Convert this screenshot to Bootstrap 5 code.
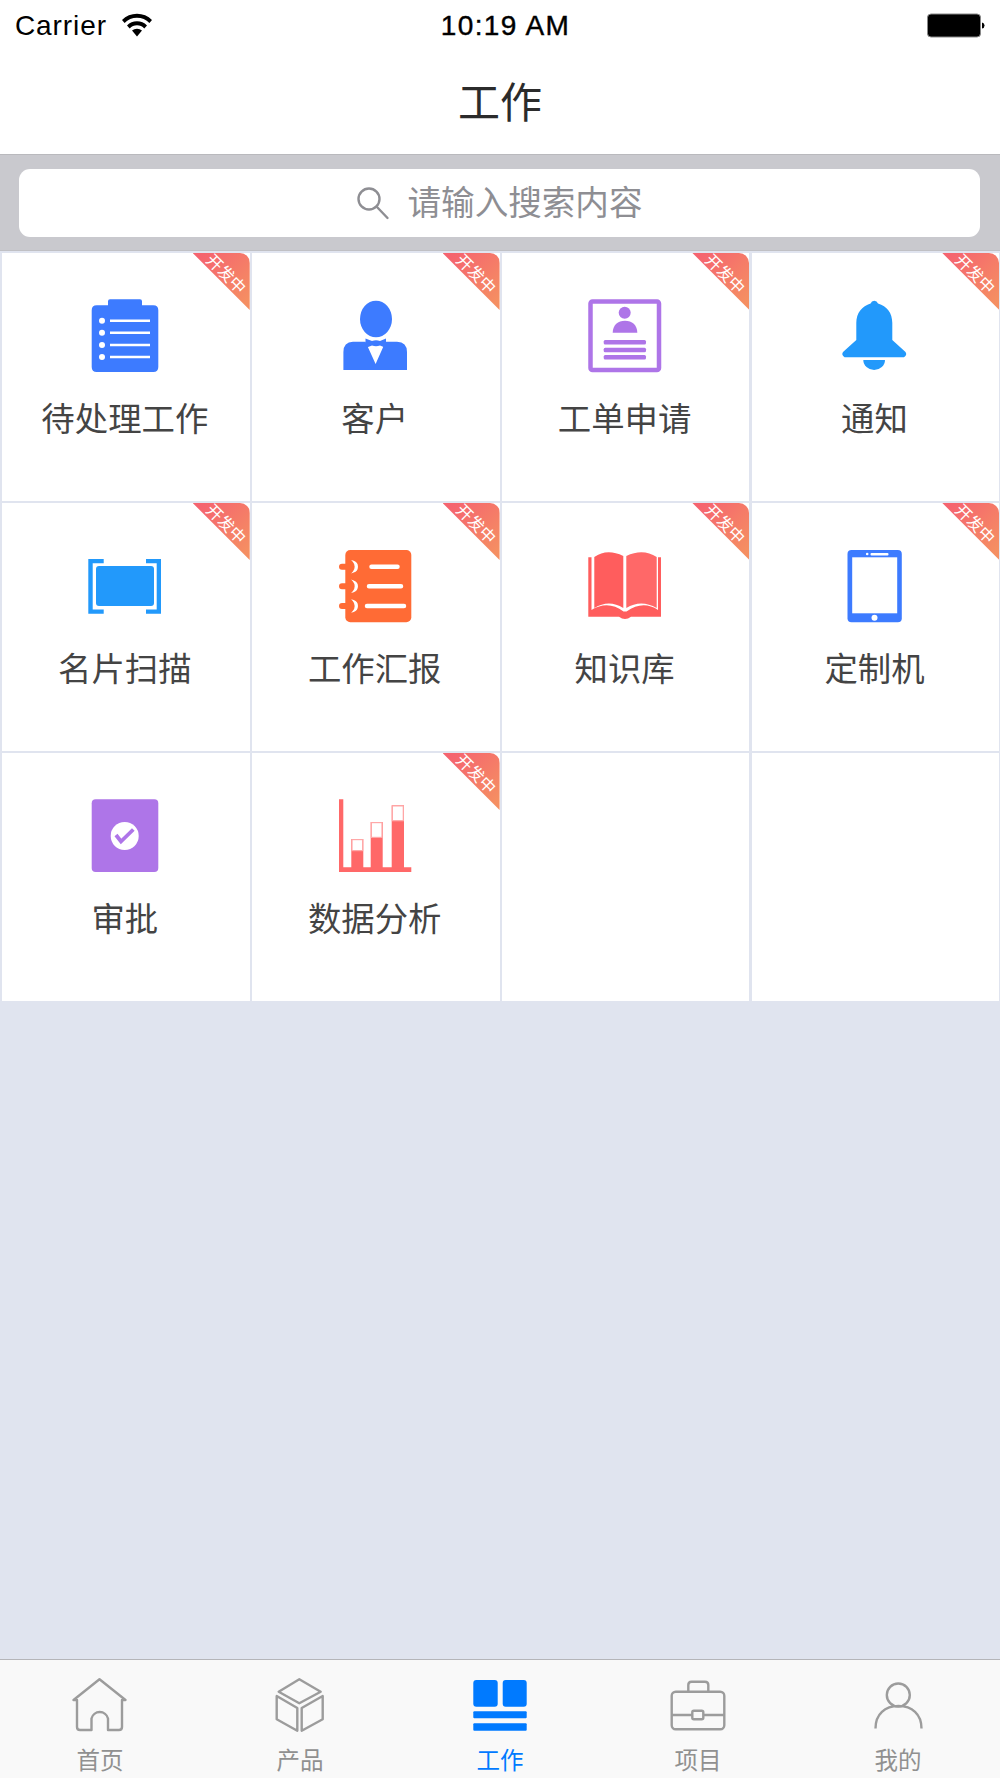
<!DOCTYPE html>
<html lang="zh-CN">
<head>
  <meta charset="UTF-8" />
  <meta name="viewport" content="width=device-width, initial-scale=1" />
  <title>工作</title>

  <!-- Bootstrap CSS -->
  <link href="https://cdn.jsdelivr.net/npm/bootstrap@5.3.3/dist/css/bootstrap.min.css" rel="stylesheet" />

  <style>
    body {
      background-color: #e0e4ef;
      font-family: "Noto Sans CJK SC", "Liberation Sans", sans-serif;
      overflow: hidden;
    }
    .status-bar {
      height: 53px;
      padding: 0 15px 2px;
      font-family: "Liberation Sans", sans-serif;
      font-size: 28px;
      letter-spacing: 0.9px;
      color: #000;
    }
    .status-wifi {
      margin: 0 0 2px 14px;
    }
    .status-time {
      left: 11px;
      right: 0;
      top: 5px;
      letter-spacing: 1.4px;
      -webkit-text-stroke: 0.4px #000;
    }
    .title-bar {
      height: 102px;
      font-size: 42px;
      line-height: 1;
      color: #2b2b2b;
      padding-bottom: 8px;
      border-bottom: 1px solid #b9b9bd;
    }
    .search-bar {
      height: 96px;
      background: #c9c9ce;
      padding: 14px 20px 13px 19px;
      border-bottom: 1px solid #c0c0c4;
    }
    .search-field {
      height: 68px;
      border-radius: 11px;
      color: #8e8e93;
      font-size: 33.6px;
      gap: 17px;
    }
    .search-text {
      padding-bottom: 4px;
    }
    .work-grid {
      display: grid;
      grid-template-columns: repeat(4, 247.7px);
      grid-auto-rows: 247.8px;
      gap: 2.2px;
      padding: 2px 0 0 2px;
    }
    .work-cell {
      position: relative;
      background: #fff;
      padding-top: 45px;
      text-align: center;
      color: #444;
      font-size: 33.4px;
      line-height: 1;
    }
    .work-cell svg {
      display: block;
      width: 74px;
      height: 75px;
      margin: 0 auto 27px;
      overflow: visible;
    }
    .work-label {
      display: block;
      margin-left: -2px;
    }
    .dev-ribbon {
      position: absolute;
      top: 0;
      right: 0;
      width: 57px;
      height: 57px;
      border-top-right-radius: 10px;
      background: linear-gradient(135deg, #f5646f 10%, #f58f62 90%);
      clip-path: polygon(0 0, 100% 0, 100% 100%);
    }
    .dev-ribbon span {
      position: absolute;
      top: 11px;
      left: 6px;
      width: 56px;
      color: #fff;
      font-size: 16px;
      line-height: 18px;
      text-align: center;
      transform: rotate(45deg);
    }
    .tab-bar {
      display: grid;
      grid-template-columns: 200px 200px 200px 196px 204px;
      height: 119px;
      background: #f9f9f9;
      border-top: 1px solid #b5b5b9;
      margin-top: auto;
    }
    .tab-item {
      padding-top: 16px;
      text-align: center;
      color: #909090;
      font-size: 23.5px;
      line-height: 1;
    }
    .tab-item svg {
      display: block;
      width: 60px;
      height: 56px;
      margin: 0 auto 16px;
      fill: none;
      stroke: #9c9c9c;
      stroke-width: 2.4;
      stroke-linejoin: round;
    }
    .tab-item.on {
      color: #007aff;
    }
    .tab-item.on svg {
      stroke: none;
      fill: #007aff;
    }
  </style>
</head>
<body>

<div class="d-flex flex-column vh-100">

  <!-- Status bar -->
  <div class="status-bar bg-white d-flex align-items-center position-relative">
    <span>Carrier</span>
    <svg class="status-wifi" width="32" height="24" viewBox="0 0 32 24">
      <path d="M1 7A21 21 0 0 1 31 7L28.400 10A17.200 17.200 0 0 0 3.600 10Z" fill="#000"/>
      <path d="M6 12.500A14 14 0 0 1 26 12.500L23.300 15.400A10 10 0 0 0 8.700 15.400Z" fill="#000"/>
      <path d="M11 17.600A7.400 7.400 0 0 1 21 17.600L16 23.600Z" fill="#000"/>
    </svg>
    <span class="status-time position-absolute text-center">10:19 AM</span>
    <div class="ms-auto d-flex align-items-center">
      <svg width="58" height="26" viewBox="0 0 58 26">
        <rect x="0.500" y="1" width="53" height="23" rx="3.500" fill="#000" stroke="#888" stroke-width="1"/>
        <path d="M55 9.500Q57.500 10 57.500 12.500T55 15.500Z" fill="#000"/>
      </svg>
    </div>
  </div>

  <!-- Title -->
  <div class="title-bar bg-white d-flex align-items-center justify-content-center">工作</div>

  <!-- Search -->
  <div class="search-bar">
    <div class="search-field bg-white d-flex align-items-center justify-content-center">
      <svg width="34" height="34" viewBox="0 0 34 34" fill="none" stroke="#8e8e93" stroke-width="2.400">
        <circle cx="13" cy="13" r="10.500"/>
        <path d="M20.500 20.500L31.500 32" stroke-linecap="round"/>
      </svg>
      <span class="search-text">请输入搜索内容</span>
    </div>
  </div>

  <!-- Work grid -->
  <div class="work-grid">
    <div class="work-cell">
      <svg viewBox="0 0 74 75">
        <path d="M19 7.300V3.300Q19 1.300 21 1.300H51Q53 1.300 53 3.300V7.300H64.300Q69.300 7.300 69.300 12.300V69Q69.300 74 64.300 74H7.700Q2.700 74 2.700 69V12.300Q2.700 7.300 7.700 7.300Z" fill="#3d7bff"/>
        <g fill="#fff"><circle cx="13" cy="22.700" r="3"/><circle cx="13" cy="34.700" r="3"/><circle cx="13" cy="47" r="3"/><circle cx="13" cy="59" r="3"/></g>
        <path d="M21 22.700H61M21 34.700H61M21 47H61M21 59H61" stroke="#fff" stroke-width="2.600"/>
      </svg>
      <span class="work-label">待处理工作</span>
      <div class="dev-ribbon"><span>开发中</span></div>
    </div>
    <div class="work-cell">
      <svg viewBox="0 0 74 75">
        <g fill="#3d7bff">
          <ellipse cx="37" cy="21" rx="16" ry="18.300"/>
          <path d="M4.400 72V54Q4.400 44 14 43.700H26.500L36.600 66L46.500 43.700H58Q68 44 68 54V72Z"/>
          <path d="M26.500 40.500L33 43Q37 41.500 41 43L47 40.500V50L41 47.500Q37 49 33 47.500L26.500 50Z"/>
        </g>
      </svg>
      <span class="work-label">客户</span>
      <div class="dev-ribbon"><span>开发中</span></div>
    </div>
    <div class="work-cell">
      <svg viewBox="0 0 74 75">
        <rect x="1.500" y="3.500" width="68.500" height="68.500" rx="2" fill="none" stroke="#ae75e8" stroke-width="4.500"/>
        <g fill="#ae75e8">
          <circle cx="35.700" cy="14.700" r="6"/>
          <path d="M23.700 34.700C23.700 27 29 22.700 36 22.700S48.300 27 48.300 34.700Z"/>
          <rect x="14.700" y="42" width="42.300" height="4.500" rx="1.500"/>
          <rect x="14.700" y="49.700" width="42.300" height="4.500" rx="1.500"/>
          <rect x="14.700" y="57" width="42.300" height="4.500" rx="1.500"/>
        </g>
      </svg>
      <span class="work-label">工单申请</span>
      <div class="dev-ribbon"><span>开发中</span></div>
    </div>
    <div class="work-cell">
      <svg viewBox="0 0 74 75">
        <g fill="#2299fb">
          <path d="M36.300 2.700Q39 3 40 5.500C49 8 54.300 15 54.300 25V42L67.500 54Q69.500 57 66 59.300H6.600Q3 57 5 54L18.300 42V25C18.300 15 24 8 32.600 5.500Q33.500 3 36.300 2.700Z"/>
          <path d="M25.300 62H47A10.850 10 0 0 1 25.300 62Z"/>
        </g>
      </svg>
      <span class="work-label">通知</span>
      <div class="dev-ribbon"><span>开发中</span></div>
    </div>

    <div class="work-cell">
      <svg viewBox="0 0 74 75">
        <g fill="#2299fb">
          <path d="M14.700 11H-0.700V65.700H14.700V61.500H3.700V15.200H14.700Z"/>
          <path d="M57 11H72V65.700H57V61.500H67.700V15.200H57Z"/>
          <rect x="7" y="18" width="58" height="40" rx="3"/>
        </g>
      </svg>
      <span class="work-label">名片扫描</span>
      <div class="dev-ribbon"><span>开发中</span></div>
    </div>
    <div class="work-cell">
      <svg viewBox="0 0 74 75">
        <rect x="6.300" y="2" width="66" height="72.300" rx="5" fill="#ff6b35"/>
        <path d="M3 18.700H14M3 38.300H14M3 58H14" stroke="#ff6b35" stroke-width="6" stroke-linecap="round"/>
        <path d="M14.500 13.500A5.500 5.500 0 0 1 14.500 23.900A8 8 0 0 0 14.500 13.500ZM14.500 33.100A5.500 5.500 0 0 1 14.500 43.500A8 8 0 0 0 14.500 33.100ZM14.500 52.800A5.500 5.500 0 0 1 14.500 63.200A8 8 0 0 0 14.500 52.800Z" fill="#fff" stroke="#fff" stroke-width="1.500"/>
        <path d="M32.500 18.700H58.500M30 38.300H62M28 58H65" stroke="#fff" stroke-width="4.500" stroke-linecap="round"/>
      </svg>
      <span class="work-label">工作汇报</span>
      <div class="dev-ribbon"><span>开发中</span></div>
    </div>
    <div class="work-cell">
      <svg viewBox="0 0 74 75">
        <path d="M5.300 9Q18 0 34.300 8V60Q20 51 5.300 60Z" fill="#ff5d5d"/>
        <path d="M37.300 8Q54 0 67.700 9V60Q52 51 37.300 60Z" fill="#ff6868"/>
        <path d="M-0.700 9.300H2.500V62Q19 52 34.500 63.500H37.500Q54 52 69 62V9.300H72V68.700H42Q36 73.500 30 68.700H-0.700Z" fill="#ff5d5d"/>
      </svg>
      <span class="work-label">知识库</span>
      <div class="dev-ribbon"><span>开发中</span></div>
    </div>
    <div class="work-cell">
      <svg viewBox="0 0 74 75">
        <rect x="9.500" y="2" width="54.300" height="72.300" rx="4" fill="#3d7bff"/>
        <rect x="14.200" y="9.300" width="45" height="56" fill="#fff"/>
        <circle cx="36.500" cy="69.700" r="3" fill="#fff"/>
        <circle cx="29.200" cy="6" r="1.300" fill="#fff"/>
        <rect x="32.500" y="5" width="18" height="2.400" rx="1" fill="#fff"/>
      </svg>
      <span class="work-label">定制机</span>
      <div class="dev-ribbon"><span>开发中</span></div>
    </div>

    <div class="work-cell">
      <svg viewBox="0 0 74 75">
        <rect x="2.700" y="1.300" width="66.600" height="72.700" rx="4" fill="#ae75e8"/>
        <circle cx="35.700" cy="38" r="14" fill="#fff"/>
        <path d="M27 37L32 43.500L44.300 31.500" fill="none" stroke="#ae75e8" stroke-width="3.800"/>
      </svg>
      <span class="work-label">审批</span>
    </div>
    <div class="work-cell">
      <svg viewBox="0 0 74 75">
        <g fill="#ff6868">
          <path d="M0 1.300H4.300V69.300H72.300V74H0Z"/>
          <rect x="12.300" y="41" width="12" height="30"/>
          <rect x="31.700" y="24" width="12" height="47"/>
          <rect x="52.700" y="7.300" width="12.300" height="63"/>
        </g>
        <g fill="#fff" stroke="#ffa8a8" stroke-width="1.200">
          <rect x="13" y="41.600" width="10.600" height="11"/>
          <rect x="32.400" y="24.600" width="10.600" height="14.800"/>
          <rect x="53.400" y="7.900" width="10.900" height="14.800"/>
        </g>
      </svg>
      <span class="work-label">数据分析</span>
      <div class="dev-ribbon"><span>开发中</span></div>
    </div>
    <div class="work-cell"></div>
    <div class="work-cell"></div>
  </div>

  <!-- Tab bar -->
  <div class="tab-bar">
    <div class="tab-item">
      <svg viewBox="0 0 60 56"><path d="M3.500 24L29.500 3.200L55.500 24H52V51Q52 54 49 54H38V42.500A8.500 8.500 0 0 0 21.500 42.500V54H10Q7 54 7 51V24Z"/></svg>
      首页
    </div>
    <div class="tab-item">
      <svg viewBox="0 0 60 56">
        <path d="M29.300 3.300L50.700 15.700L29.300 27.300L8.700 15.700Z"/>
        <path d="M6.700 20V43.300L27.300 54.700V32Z"/>
        <path d="M52.700 20V43.300L31.700 54.700V32Z"/>
      </svg>
      产品
    </div>
    <div class="tab-item on">
      <svg viewBox="0 0 60 56">
        <rect x="3.300" y="4" width="24.400" height="26.700" rx="3"/>
        <rect x="32.700" y="4" width="24" height="26.700" rx="3"/>
        <rect x="3.300" y="35.300" width="53.400" height="7" rx="1"/>
        <rect x="3.300" y="47.300" width="53.400" height="7.400" rx="1"/>
      </svg>
      工作
    </div>
    <div class="tab-item">
      <svg viewBox="0 0 60 56">
        <path d="M20.300 15.700V9Q20.300 5.700 23.500 5.700H37Q40.300 5.700 40.300 9V15.700"/>
        <rect x="3.700" y="15.700" width="52.600" height="37.600" rx="4"/>
        <path d="M3.700 39H24.300M35.300 39H56.300"/>
        <rect x="24.300" y="34.700" width="11" height="8.600" rx="1.500"/>
      </svg>
      项目
    </div>
    <div class="tab-item">
      <svg viewBox="0 0 60 56">
        <circle cx="30.300" cy="19" r="11.500"/>
        <path d="M7.500 52.500C7.500 38 17 30 30.500 30S53.500 38 53.500 52.500"/>
      </svg>
      我的
    </div>
  </div>

</div>

<!-- Bootstrap JS -->
<script src="https://cdn.jsdelivr.net/npm/bootstrap@5.3.3/dist/js/bootstrap.bundle.min.js"></script>
</body>
</html>
